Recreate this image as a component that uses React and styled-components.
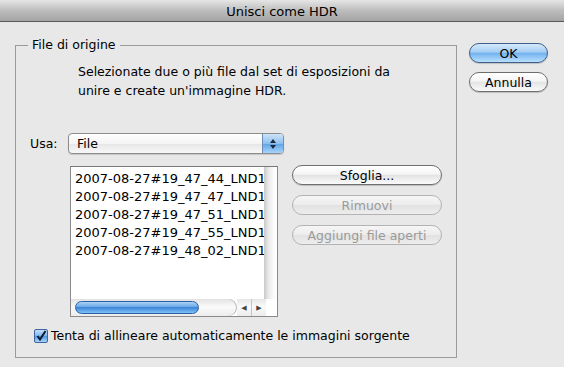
import React from 'react';
import styled, { createGlobalStyle } from 'styled-components';

const GlobalStyle = createGlobalStyle`
  html, body {
    margin: 0;
    padding: 0;
    background: #e8e8e8;
  }
  body {
    font-family: "DejaVu Sans", "Liberation Sans", sans-serif;
    font-size: 12.5px;
    color: #000;
  }
`;

const Window = styled.div`
  width: 564px;
  height: 367px;
  background: #e8e8e8;
  overflow: hidden;
`;

const TitleBar = styled.div`
  height: 22px;
  box-sizing: border-box;
  padding-top: 1px;
  border-bottom: 1px solid #5a5a5a;
  background: linear-gradient(#e6e6e6, #bdbdbd 50%, #a4a4a4);
  display: flex;
  align-items: center;
  justify-content: center;
  font-size: 13px;
`;

const Body = styled.div`
  display: flex;
  align-items: flex-start;
  padding: 21px 0 0 15px;
  gap: 12px;
`;

const GroupBox = styled.div`
  position: relative;
  margin-top: 2px;
  width: 442px;
  height: 313px;
  box-sizing: border-box;
  border: 1px solid #9a9a9a;
  display: flex;
  flex-direction: column;
`;

const Legend = styled.span`
  position: absolute;
  top: -9px;
  left: 12px;
  padding: 0 4px;
  background: #e8e8e8;
  line-height: 16px;
`;

const Description = styled.p`
  margin: 16px 0 0 62px;
  line-height: 19px;
`;

const UsaRow = styled.div`
  display: flex;
  align-items: center;
  margin: 33px 0 0 14px;
`;

const Label = styled.span`
  width: 38px;
`;

const Select = styled.div`
  width: 216px;
  height: 21px;
  box-sizing: border-box;
  border: 1px solid #8c8c8c;
  border-radius: 4px;
  background: linear-gradient(#ffffff, #f4f4f4 50%, #e6e6e6 51%, #f8f8f8);
  display: flex;
  align-items: center;
  overflow: hidden;
  box-shadow: 0 1px 1px rgba(0, 0, 0, 0.15);
`;

const SelectText = styled.span`
  flex: 1;
  padding-left: 8px;
`;

const Stepper = styled.div`
  width: 20px;
  height: 100%;
  border-left: 1px solid #6b8cb5;
  background: linear-gradient(#cfe4f8, #8dc0ee 50%, #5fa3e4 51%, #a6d4fb);
  display: flex;
  align-items: center;
  justify-content: center;
`;

const ContentRow = styled.div`
  display: flex;
  align-items: flex-start;
  margin: 12px 0 0 54px;
  gap: 14px;
`;

const ListBox = styled.div`
  width: 208px;
  height: 151px;
  box-sizing: border-box;
  border: 1px solid #8a8a8a;
  border-top-color: #777;
  background: #fff;
  display: flex;
  flex-direction: column;
`;

const ListMain = styled.div`
  flex: 1;
  display: flex;
  min-height: 0;
`;

const Items = styled.div`
  width: 193px;
  overflow: hidden;
  padding-top: 3px;
`;

const Item = styled.div`
  font-size: 13px;
  line-height: 18px;
  padding-left: 4px;
  white-space: nowrap;
`;

const VTrack = styled.div`
  width: 13px;
  background: linear-gradient(90deg, #c9c9c9, #e9e9e9 35%, #fafafa 70%, #fff);
`;

const HBar = styled.div`
  height: 17px;
  display: flex;
  align-items: stretch;
`;

const HTrack = styled.div`
  width: 162px;
  display: flex;
  align-items: center;
  padding-left: 4px;
  background: linear-gradient(#e2e2e2, #fafafa 45%, #ececec);
  border-radius: 0 9px 9px 0;
  box-shadow: inset -1px 0 0 #b8b8b8;
`;

const Thumb = styled.div`
  width: 124px;
  height: 13px;
  border-radius: 7px;
  border: 1px solid #2d5fa4;
  box-sizing: border-box;
  background: linear-gradient(#a9d2f7, #6aa9e6 45%, #3d86d8 50%, #7dc0f7);
`;

const ArrowBtn = styled.div`
  width: 14px;
  display: flex;
  align-items: center;
  justify-content: center;
  background: linear-gradient(#e6e6e6, #fafafa 45%, #ececec);
  border-left: ${(p) => (p.$sep ? '1px solid #c4c4c4' : 'none')};
  color: #444;
  font-size: 7px;
`;

const Corner = styled.div`
  flex: 1;
  background: #fff;
`;

const ButtonCol = styled.div`
  display: flex;
  flex-direction: column;
  gap: 10px;
  margin-top: -1px;
`;

const PillButton = styled.div`
  width: ${(p) => p.$width || 150}px;
  height: 20px;
  box-sizing: border-box;
  border-radius: 10px;
  border: 1px solid ${(p) => (p.$disabled ? '#b3b3b3' : p.$primary ? '#3e5f8c' : '#6e6e6e')};
  background: ${(p) =>
    p.$primary
      ? 'linear-gradient(#d6eafb, #a3cdf3 45%, #73b2ee 52%, #b9e0ff)'
      : p.$disabled
      ? 'linear-gradient(#f6f6f6, #ececec 50%, #e2e2e2 52%, #ededed)'
      : 'linear-gradient(#ffffff, #f5f5f5 45%, #e4e4e4 52%, #fafafa)'};
  color: ${(p) => (p.$disabled ? '#9a9a9a' : '#000')};
  display: flex;
  align-items: center;
  justify-content: center;
  box-shadow: ${(p) => (p.$disabled ? 'none' : '0 1px 1px rgba(0,0,0,0.18)')};
  font-size: 12.5px;
`;

const SideButtons = styled.div`
  display: flex;
  flex-direction: column;
  gap: 9px;
`;

const CheckRow = styled.label`
  display: flex;
  align-items: center;
  gap: 3px;
  margin: 11px 0 0 18px;
`;

const CheckBox = styled.span`
  width: 14px;
  height: 14px;
  box-sizing: border-box;
  border: 1px solid #3f63a0;
  border-radius: 2px;
  background: linear-gradient(#c4e0fa, #7db6ec 50%, #4f96e0 52%, #a9d7fd);
  display: flex;
  align-items: center;
  justify-content: center;
`;

const files = [
  '2007-08-27#19_47_44_LND1',
  '2007-08-27#19_47_47_LND1',
  '2007-08-27#19_47_51_LND1',
  '2007-08-27#19_47_55_LND1',
  '2007-08-27#19_48_02_LND1',
];

const App = () => {
  return (
    <>
      <GlobalStyle />
      <Window>
        <TitleBar>Unisci come HDR</TitleBar>
        <Body>
          <GroupBox>
            <Legend>File di origine</Legend>
            <Description>
              Selezionate due o più file dal set di esposizioni da
              <br />
              unire e create un'immagine HDR.
            </Description>
            <UsaRow>
              <Label>Usa:</Label>
              <Select>
                <SelectText>File</SelectText>
                <Stepper>
                  <svg width="8" height="12" viewBox="0 0 8 12">
                    <path d="M4 1 L7 5 L1 5 Z" fill="#1b2a40" />
                    <path d="M4 11 L7 7 L1 7 Z" fill="#1b2a40" />
                  </svg>
                </Stepper>
              </Select>
            </UsaRow>
            <ContentRow>
              <ListBox>
                <ListMain>
                  <Items>
                    {files.map((f) => (
                      <Item key={f}>{f}</Item>
                    ))}
                  </Items>
                  <VTrack />
                </ListMain>
                <HBar>
                  <HTrack>
                    <Thumb />
                  </HTrack>
                  <ArrowBtn>◀</ArrowBtn>
                  <ArrowBtn $sep>▶</ArrowBtn>
                  <Corner />
                </HBar>
              </ListBox>
              <ButtonCol>
                <PillButton>Sfoglia...</PillButton>
                <PillButton $disabled>Rimuovi</PillButton>
                <PillButton $disabled>Aggiungi file aperti</PillButton>
              </ButtonCol>
            </ContentRow>
            <CheckRow>
              <CheckBox>
                <svg width="12" height="12" viewBox="0 0 12 12">
                  <path d="M2.5 6 L5 9.5 L10.5 1" fill="none" stroke="#0d1a33" strokeWidth="2" />
                </svg>
              </CheckBox>
              Tenta di allineare automaticamente le immagini sorgente
            </CheckRow>
          </GroupBox>
          <SideButtons>
            <PillButton $primary $width={79}>OK</PillButton>
            <PillButton $width={79}>Annulla</PillButton>
          </SideButtons>
        </Body>
      </Window>
    </>
  );
};

export default App;
